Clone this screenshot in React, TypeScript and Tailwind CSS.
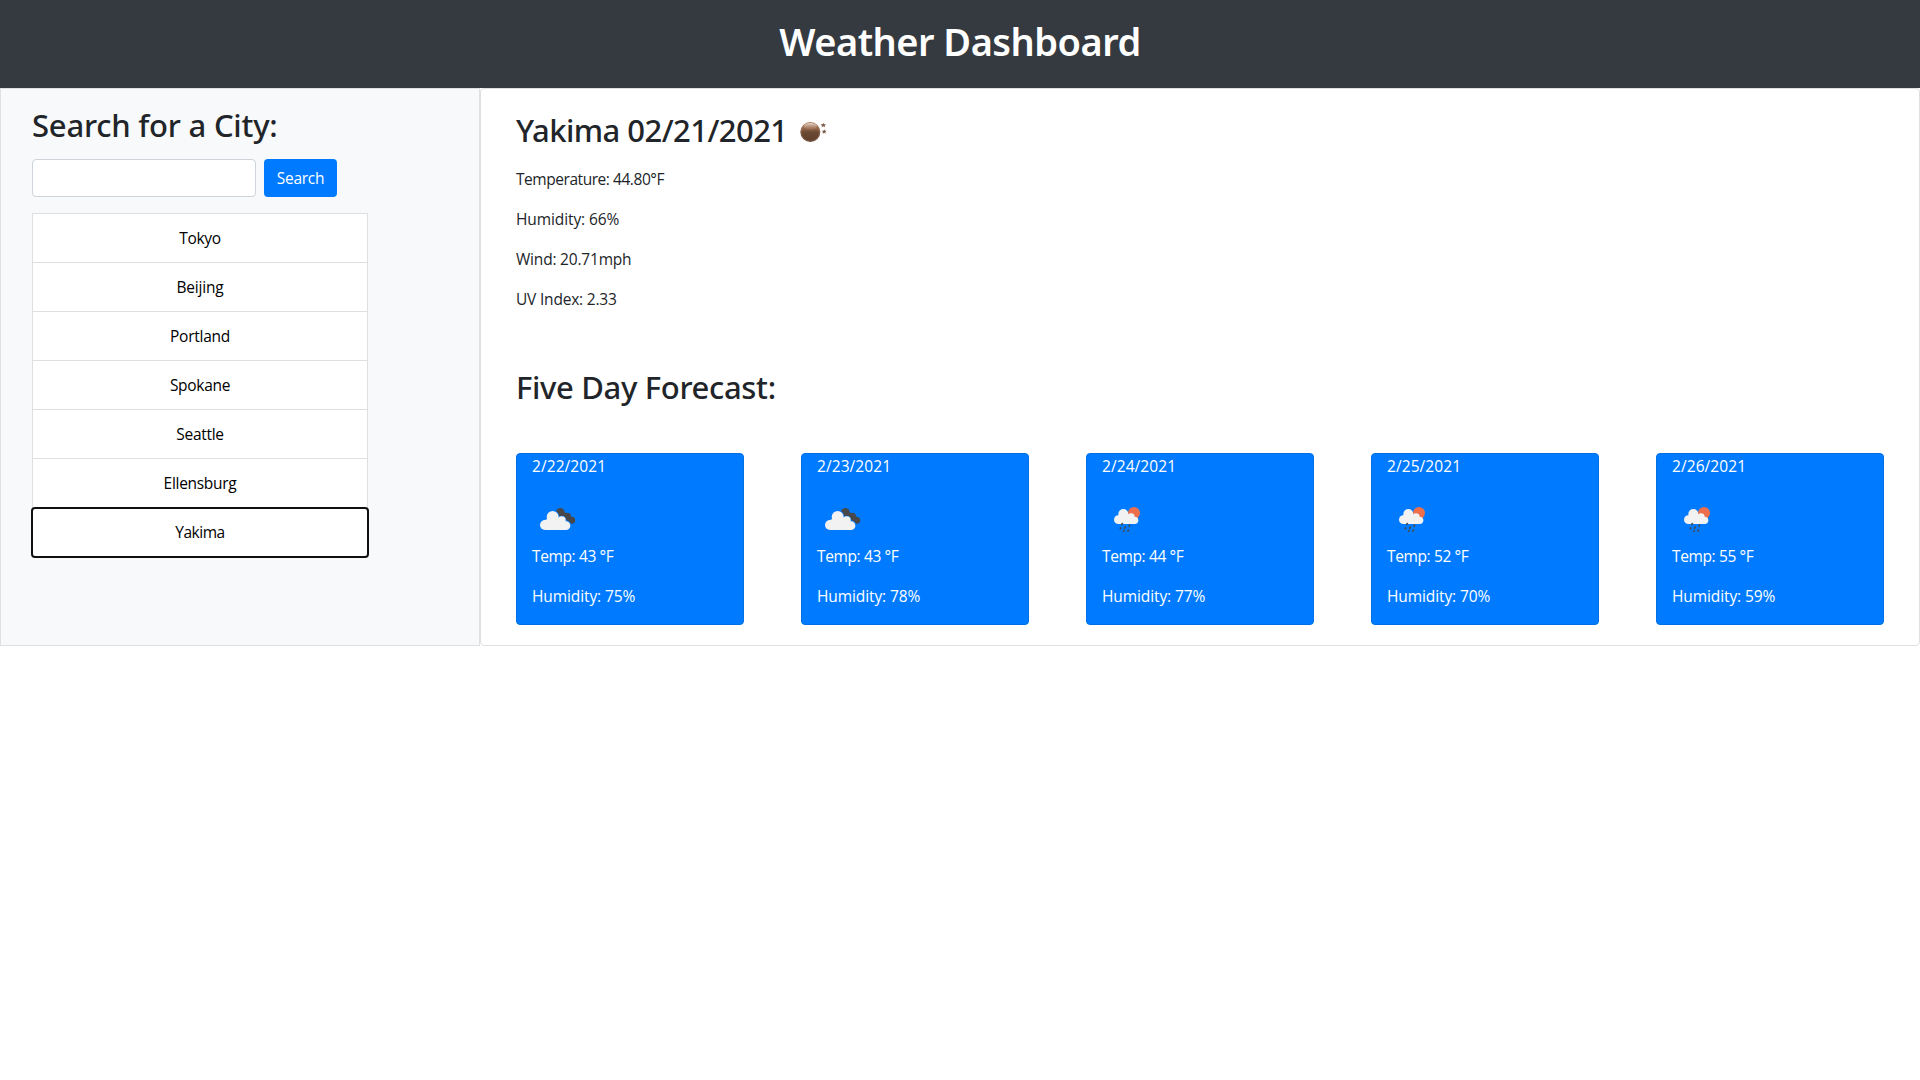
import React from "react";

type Sky = "clouds" | "rain";

interface Day {
  date: string;
  sky: Sky;
  temp: number;
  humidity: number;
}

const cities = [
  { name: "Tokyo", tracking: "tracking-[-0.3px]" },
  { name: "Beijing", tracking: "tracking-[-0.2px]" },
  { name: "Portland", tracking: "tracking-[-0.25px]" },
  { name: "Spokane", tracking: "tracking-[-0.3px]" },
  { name: "Seattle", tracking: "tracking-[-0.3px]" },
  { name: "Ellensburg", tracking: "tracking-[-0.3px]" },
  { name: "Yakima", tracking: "tracking-[-0.5px]" },
];

const readings = [
  { text: "Temperature: 44.80°F", tracking: "tracking-[-0.45px]" },
  { text: "Humidity: 66%", tracking: "tracking-[-0.1px]" },
  { text: "Wind: 20.71mph", tracking: "tracking-[-0.2px]" },
  { text: "UV Index: 2.33", tracking: "tracking-[-0.2px]" },
];

const forecast: Day[] = [
  { date: "2/22/2021", sky: "clouds", temp: 43, humidity: 75 },
  { date: "2/23/2021", sky: "clouds", temp: 43, humidity: 78 },
  { date: "2/24/2021", sky: "rain", temp: 44, humidity: 77 },
  { date: "2/25/2021", sky: "rain", temp: 52, humidity: 70 },
  { date: "2/26/2021", sky: "rain", temp: 55, humidity: 59 },
];

function NightIcon() {
  return (
    <svg viewBox="60 33 84 66" className="h-[22px] w-[28px]">
      <defs>
        <linearGradient id="orb" x1="0" y1="0" x2="0" y2="1">
          <stop offset="0" stopColor="#b07c5c" />
          <stop offset="0.35" stopColor="#8f6448" />
          <stop offset="0.5" stopColor="#6b4a34" />
          <stop offset="1" stopColor="#5d3d29" />
        </linearGradient>
        <linearGradient id="shine" x1="0" y1="0" x2="0" y2="1">
          <stop offset="0" stopColor="#fff" stopOpacity="0.7" />
          <stop offset="1" stopColor="#c9a48c" stopOpacity="0.1" />
        </linearGradient>
      </defs>
      <circle cx="91" cy="66" r="30" fill="url(#orb)" />
      <circle cx="91" cy="66" r="27.5" fill="none" stroke="#b58a70" strokeWidth="1.5" opacity="0.7" />
      <ellipse cx="91" cy="49" rx="20" ry="10" fill="url(#shine)" />
      <path d="M130 38l2 5 6 0-4 4 1 5-5-3-5 3 1-5-4-4 6 0z" fill="#7a5846" />
      <path d="M133 58l2 4 5 0-4 4 1 5-4-3-5 3 1-5-4-4 6 0z" fill="#7a5846" />
    </svg>
  );
}

function CloudsIcon() {
  return (
    <svg viewBox="30 21 108 72" className="mt-[29px] ml-2 h-6 w-9">
      <g fill="#48484a">
        <circle cx="91" cy="37" r="13" />
        <circle cx="112" cy="49" r="11" />
        <circle cx="125" cy="61" r="10.5" />
        <path d="M80 44L104 37L123 50.500L125 71.500L108 66z" />
      </g>
      <g fill="#007bff">
        <circle cx="68" cy="51" r="20" />
        <circle cx="95" cy="61" r="14" />
        <circle cx="108" cy="76" r="15.500" />
      </g>
      <g fill="#f2f2f2">
        <circle cx="68" cy="51" r="18" />
        <circle cx="95" cy="61" r="12" />
        <circle cx="45" cy="75" r="15" />
        <circle cx="108" cy="77" r="13" />
        <path d="M45 60L68 50L95 56L108 70V90H45z" />
      </g>
    </svg>
  );
}

function RainIcon() {
  return (
    <svg viewBox="39 18 84 84" className="mt-7 ml-[11px] size-7">
      <circle cx="102" cy="39" r="18" fill="#ec6e4c" />
      <g fill="#f2f2f2">
        <circle cx="70" cy="42" r="15" />
        <circle cx="93" cy="51" r="11" />
        <circle cx="55" cy="59" r="13" />
        <circle cx="104" cy="61" r="11" />
        <path d="M55 46L70 42L93 48L104 54V72H55z" />
      </g>
      <g stroke="#48484a" strokeWidth="4.500">
        <path d="M68 69l-4 6M63 82l-3 6M77 79l-4 8M89 73l-2 8" />
        <path d="M73 90l-3 6M86 88l-3 7" />
      </g>
    </svg>
  );
}

function ForecastCard({ day }: { day: Day }) {
  return (
    <article className="flex h-[172px] w-[228px] flex-col rounded-[4px] border border-[#006fe6] bg-[#007bff] px-[15px] text-white">
      <p className="h-6 tracking-[0.08px]">{day.date}</p>
      <div className="h-[66px]">{day.sky === "clouds" ? <CloudsIcon /> : <RainIcon />}</div>
      <p className="mb-4 h-6 tracking-[-0.38px]">Temp: {day.temp} °F</p>
      <p className="h-6 tracking-[-0.1px]">Humidity: {day.humidity}%</p>
    </article>
  );
}

export default function App() {
  return (
    <div className="min-h-screen bg-white font-['Open_Sans',sans-serif] text-[15.5px] leading-6 text-[#212529]">
      <header className="flex h-[88px] justify-center bg-[#343a40] pt-[17px]">
        <h1 className="font-['Noto_Sans',sans-serif] text-[38px] leading-[48px] font-semibold tracking-[-0.52px] text-white">
          Weather Dashboard
        </h1>
      </header>

      <main className="flex h-[558px]">
        <aside className="w-[480px] border border-[#dfe0e1] bg-[#f8f9fa] pt-[14px] pl-[31px]">
          <h2 className="mb-2 h-12 font-['Noto_Sans',sans-serif] text-[31px] leading-[44px] font-medium tracking-[-0.22px]">
            Search for a City:
          </h2>
          <form className="flex h-[38px] gap-2" onSubmit={(e) => e.preventDefault()}>
            <input className="w-[224px] rounded-[4px] border border-[#ced4da] bg-white px-3" aria-label="City" />
            <button className="w-[73px] rounded-[4px] bg-[#007bff] text-center tracking-[-0.28px] text-white">
              Search
            </button>
          </form>
          <ul className="mt-4 w-[336px] border border-[#dfdfdf] bg-white text-center text-black">
            {cities.map((city, i) => (
              <li
                key={city.name}
                className={
                  i === cities.length - 1
                    ? "mt-px h-[47px] rounded-[2px] pt-[11px] outline-2 outline-[#101010]"
                    : "h-[49px] border-b border-[#dfdfdf] pt-3"
                }
              >
                <span className={city.tracking}>{city.name}</span>
              </li>
            ))}
          </ul>
        </aside>

        <section className="flex w-[1440px] flex-col rounded-[4px] border border-[#dfdfdf] px-[35px] pt-[19px]">
          <div className="flex h-[59px] gap-[13px]">
            <h2 className="w-[271px] font-['Noto_Sans',sans-serif] text-[31px] leading-[44px] font-medium tracking-[-0.55px] whitespace-nowrap">
              Yakima 02/21/2021
            </h2>
            <div className="pt-[13px]">
              <NightIcon />
            </div>
          </div>
          {readings.map((r) => (
            <p key={r.text} className={`mb-4 h-6 ${r.tracking}`}>
              {r.text}
            </p>
          ))}
          <h2 className="mt-[38px] h-[88px] font-['Noto_Sans',sans-serif] text-[31px] leading-[44px] font-medium tracking-[-0.33px]">
            Five Day Forecast:
          </h2>
          <div className="flex justify-between">
            {forecast.map((day) => (
              <ForecastCard key={day.date} day={day} />
            ))}
          </div>
        </section>
      </main>
    </div>
  );
}
